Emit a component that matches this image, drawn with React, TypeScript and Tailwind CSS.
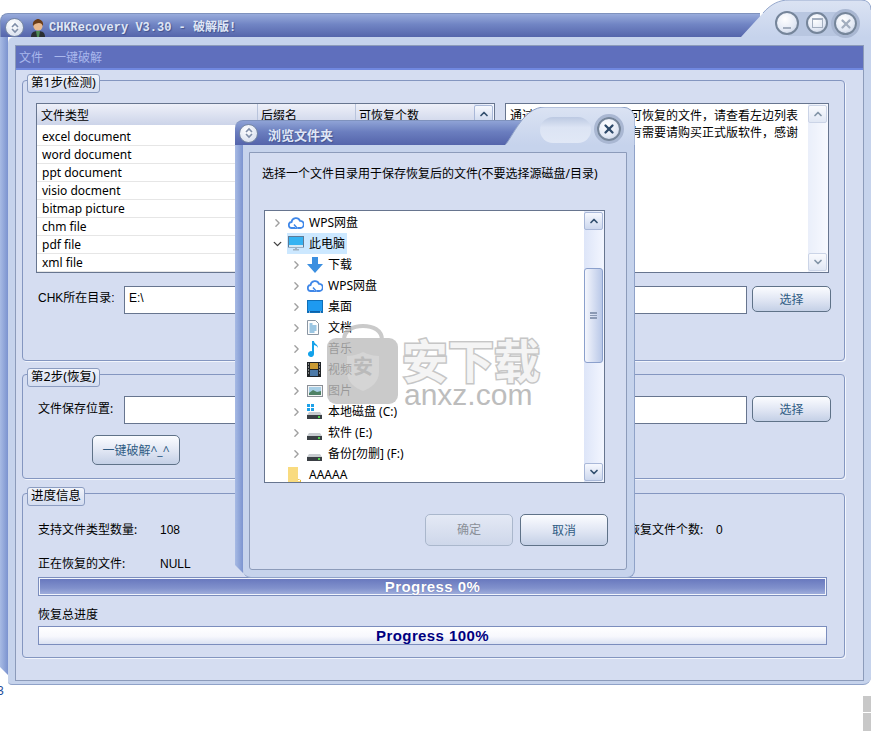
import { ChevronDown, ChevronRight, ChevronUp, X } from "lucide-react";
import type { ReactNode } from "react";

const FONT = "font-['Noto_Sans','Noto_Sans_CJK_SC',sans-serif]";
const ARIAL = "font-['Liberation_Sans','Noto_Sans_CJK_SC',sans-serif]";

const rows = [
  "excel document",
  "word document",
  "ppt document",
  "visio docment",
  "bitmap picture",
  "chm file",
  "pdf file",
  "xml file",
];

const ScrollBtn = ({ down }: { down?: boolean }) => (
  <div className="h-[18px] w-[19px] flex items-center justify-center rounded-[2px] border border-[#a9b8d8] bg-[linear-gradient(#f6f8fe,#cdd8ee)]">
    {down ? (
      <ChevronDown size={12} strokeWidth={3.5} className="text-[#33506f]" />
    ) : (
      <ChevronUp size={12} strokeWidth={3.5} className="text-[#33506f]" />
    )}
  </div>
);

const Legend = ({ children }: { children: ReactNode }) => (
  <div className="absolute left-[4px] top-[-7px] h-[19px] px-[3px] flex items-center rounded-[3px] border border-[#8b9cc0] bg-[linear-gradient(#f1f4fb,#d3dcf0)] text-[12.5px] text-black leading-none whitespace-nowrap">
    {children}
  </div>
);

const SkinButton = ({ children, className = "" }: { children: ReactNode; className?: string }) => (
  <div
    className={`flex items-center justify-center rounded-[5px] border border-[#5f7288] bg-[linear-gradient(#fbfcff,#dfe5f3_55%,#c4d0e6)] pt-[1px] text-[12px] text-[#2f5c84] ${className}`}
  >
    {children}
  </div>
);

const Field = ({ children }: { children?: ReactNode }) => (
  <div className={`w-[623px] h-[28px] border border-[#67758f] bg-white pl-[4px] pt-[3px] text-[12px] leading-[16px] text-black ${ARIAL}`}>
    {children}
  </div>
);

const Circle = ({ children, size, cls }: { children: ReactNode; size: string; cls?: string }) => (
  <div
    className={`${size} ${cls ?? ""} rounded-full border-2 border-[#75859a] bg-[radial-gradient(circle_at_40%_30%,#ffffff,#e3e9f5_60%,#b9c5db)] shadow-[0_0_0_3px_#a9b7d2] flex items-center justify-center`}
  >
    {children}
  </div>
);

const MenuGlyph = () => (
  <svg width="10" height="12" viewBox="0 0 10 12">
    <path d="M2 5 5 2l3 3M2 7l3 3 3-3" fill="none" stroke="#7f8ea8" strokeWidth="1.6" />
  </svg>
);

const Avatar = () => (
  <svg width="16" height="18" viewBox="0 0 16 18">
    <path d="M1 18c0-4 2-6 7-6s7 2 7 6z" fill="#2a2f33" />
    <path d="M6 12h4l-1 6H7z" fill="#4d8a55" />
    <circle cx="8" cy="7" r="4.6" fill="#e9b98e" />
    <path d="M3 7c-1-5 3-7 5-7s6 2 5 7c-1-2-2-3-4-3S4 5 3 7z" fill="#6b3d18" />
  </svg>
);

const Cloud = () => (
  <svg width="16" height="13" viewBox="0 0 16 13">
    <path
      d="M7 12H4a3 3 0 0 1-.4-6A4.400 4.400 0 0 1 12 4.800a3.400 3.400 0 0 1 .3 7.200H9.500"
      fill="#fff"
      stroke="#3f87e8"
      strokeWidth="1.8"
    />
    <path d="M6 8.500 9 12 6.500 13" fill="none" stroke="#3f87e8" strokeWidth="1.500" />
  </svg>
);

const Monitor = () => (
  <svg width="16" height="15" viewBox="0 0 16 15">
    <rect x="0.500" y="0.500" width="15" height="10.500" fill="#35b3f2" stroke="#5f7a96" />
    <path d="M1 9h14v2H1z" fill="#d5e7f2" />
    <path d="M5 13h6v1.500H5zM7 11h2v2H7z" fill="#9fb0c0" />
  </svg>
);

const Download = () => (
  <svg width="16" height="16" viewBox="0 0 16 16">
    <path d="M5 0h6v7h5l-8 9-8-9h5z" fill="#3b8fe0" />
  </svg>
);

const Desktop = () => (
  <svg width="16" height="13" viewBox="0 0 16 13">
    <rect x="0.500" y="0.500" width="15" height="12" fill="#1e9af0" stroke="#0f6fb8" />
    <path d="M1 11h14v1H1z" fill="#0c5fa8" />
    <path d="M2 12h1M13 12h1" stroke="#fff" />
  </svg>
);

const Doc = () => (
  <svg width="12" height="15" viewBox="0 0 12 15">
    <path d="M.5.500h8l3 3v11H.5z" fill="#fdfdfd" stroke="#8b96a3" />
    <path d="M2.500 4h3M2.500 6h7M2.500 8h7M2.500 10h7M2.500 12h5" stroke="#3b8fc8" />
  </svg>
);

const Note = () => (
  <svg width="12" height="16" viewBox="0 0 12 16">
    <path d="M5 0h2c0 3 4 3 4 7-1-2-2-2.500-4-3v9a3 3 0 1 1-2-2.800z" fill="#13a2ea" />
  </svg>
);

const Film = () => (
  <svg width="14" height="15" viewBox="0 0 14 15">
    <rect width="14" height="15" fill="#1f2326" />
    <rect x="3" y="1" width="8" height="6" fill="#c99a33" />
    <rect x="3" y="8" width="8" height="6" fill="#4c7aa8" />
    <path d="M1 2h1M1 5h1M1 8h1M1 11h1M12 2h1M12 5h1M12 8h1M12 11h1" stroke="#e8e8e8" />
  </svg>
);

const Picture = () => (
  <svg width="16" height="12" viewBox="0 0 16 12">
    <rect x="0.500" y="0.500" width="15" height="11" fill="#f3f4f5" stroke="#8a8f96" />
    <rect x="2" y="2" width="12" height="8" fill="#a8cfe6" />
    <path d="M2 8l4-3 4 2 4-1v4H2z" fill="#4f8266" />
  </svg>
);

const Disk = ({ win }: { win?: boolean }) => (
  <svg width="15" height="15" viewBox="0 0 15 15">
    {win && <path d="M0 0h3v3H0zM4 0h3v3H4zM0 4h3v3H0zM4 4h3v3H4z" fill="#1da1e8" />}
    <path d="M2 8h11l2 3H0z" fill="#c8ccd0" />
    <rect y="11" width="15" height="4" fill="#3a3f44" />
    <rect x="11" y="12" width="2" height="2" fill="#52d14f" />
  </svg>
);

const Folder = () => (
  <svg width="13" height="16" viewBox="0 0 13 16">
    <path d="M0 0h10v14h3v2H0z" fill="#f9db7f" />
    <path d="M10 13v-1l3 1v3h-1v-3z" fill="#e5b93f" />
  </svg>
);

type TreeItem = {
  label: string;
  icon: ReactNode;
  level: number;
  open?: boolean;
  selected?: boolean;
  leaf?: boolean;
};

const tree: TreeItem[] = [
  { label: "WPS网盘", icon: <Cloud />, level: 0 },
  { label: "此电脑", icon: <Monitor />, level: 0, open: true, selected: true },
  { label: "下载", icon: <Download />, level: 1 },
  { label: "WPS网盘", icon: <Cloud />, level: 1 },
  { label: "桌面", icon: <Desktop />, level: 1 },
  { label: "文档", icon: <Doc />, level: 1 },
  { label: "音乐", icon: <Note />, level: 1 },
  { label: "视频", icon: <Film />, level: 1 },
  { label: "图片", icon: <Picture />, level: 1 },
  { label: "本地磁盘 (C:)", icon: <Disk win />, level: 1 },
  { label: "软件 (E:)", icon: <Disk />, level: 1 },
  { label: "备份[勿删] (F:)", icon: <Disk />, level: 1 },
  { label: "AAAAA", icon: <Folder />, level: 0, leaf: true },
];

const TreeRow = ({ item }: { item: TreeItem }) => (
  <div className={`h-[21px] flex items-center text-[12px] text-black whitespace-nowrap ${item.level ? "pl-[25px]" : "pl-[6px]"}`}>
    <span className="w-[13px] flex justify-center shrink-0">
      {item.leaf ? null : item.open ? (
        <ChevronDown size={14} strokeWidth={2.5} className="text-[#404040]" />
      ) : (
        <ChevronRight size={14} strokeWidth={2.5} className="text-[#a0a0a0]" />
      )}
    </span>
    <div className={`ml-[3px] h-[21px] flex items-center pl-[1px] pr-[2px] ${item.selected ? "bg-[#cce8ff]" : ""}`}>
      <span className="w-[19px] shrink-0 flex">{item.icon}</span>
      <span className="ml-[2px]">{item.label}</span>
    </div>
  </div>
);

const BrowseDialog = () => (
  <div className="absolute left-[235px] top-[107px] w-[400px] h-[471px] flex flex-col">
    <div className="flex h-[38px] shrink-0">
      <div className="w-[290px] mt-[13px] rounded-tl-[8px] border-t border-[#7f92bd] bg-[linear-gradient(#8fa3d6,#6b7ebf_45%,#5464ab)] flex items-center pl-[4px]">
        <div className="w-[19px] h-[19px] rounded-full border border-[#7687a2] bg-[radial-gradient(circle_at_40%_30%,#ffffff,#cfd8ea)] flex items-center justify-center">
          <MenuGlyph />
        </div>
        <span className="ml-[10px] mt-[6px] text-[13px] font-bold text-[#dfe6f5] [text-shadow:1px_1px_1px_#43538f]">浏览文件夹</span>
      </div>
      <div className="relative -ml-[20px] w-[130px] h-[38px]">
        <svg width="130" height="38" viewBox="0 0 130 38" className="block">
          <defs>
            <linearGradient id="dlgTab" x1="0" y1="0" x2="0" y2="1">
              <stop offset="0" stopColor="#dbe3f3" />
              <stop offset="1" stopColor="#c6d3ec" />
            </linearGradient>
          </defs>
          <path d="M0 38 C8 30 18 0 40 0 H116 Q130 0 130 14 V38 Z" fill="url(#dlgTab)" />
          <path d="M0 38 C8 30 18 0 40 0 H116 Q130 0 130 14 V38" fill="none" stroke="#8fa2c8" />
        </svg>
        <div className="absolute left-[35px] top-[10px] w-[51px] h-[26px] rounded-[13px] bg-[linear-gradient(#bcc9e2,#dce4f4_40%,#e1e8f6)]" />
        <Circle size="w-[24px] h-[24px]" cls="absolute left-[92px] top-[10px]">
          <X size={14} strokeWidth={4} className="text-[#2e4a6a]" />
        </Circle>
      </div>
    </div>
    <div className="flex flex-1 min-h-0">
      <div className="w-[8px] h-[calc(100%-5px)] bg-[linear-gradient(90deg,#a7bae4,#7c94d0)] [clip-path:polygon(0_0,100%_0,100%_100%,0_calc(100%-8px))]" />
      <div className="flex-1 rounded-b-[8px] bg-[#c6d3ec] border-b border-r border-[#8fa2c8] pl-[6px] pr-[7px] pt-[7px] pb-[7px] flex">
        <div className="flex-1 border border-[#8c9bba] rounded-b-[3px] bg-[#d5ddf1] flex flex-col pl-[12px]">
          <div className="h-[40px] mt-[1px] flex items-center text-[12px] text-black">选择一个文件目录用于保存恢复后的文件(不要选择源磁盘/目录)</div>
          <div className="mt-[16px] ml-[2px] w-[341px] h-[273px] border border-[#67758f] bg-white flex">
            <div className="flex-1 overflow-hidden pt-[1px]">
              {tree.map((item, i) => (
                <TreeRow key={i} item={item} />
              ))}
            </div>
            <div className="w-[20px] shrink-0 bg-[linear-gradient(90deg,#dde5f8,#f3f6ff)] flex flex-col pt-[1px] pb-[1px]">
              <ScrollBtn />
              <div className="mt-[38px] h-[95px] w-[19px] rounded-[3px] border border-[#8ba0cc] bg-[linear-gradient(90deg,#f4f6fd,#b9c8e8)] flex items-center justify-center">
                <div className="w-[7px] h-[7px] border-y-2 border-[#8b9ab5] [background:linear-gradient(#8b9ab5,#8b9ab5)_center/100%_1px_no-repeat]" />
              </div>
              <div className="flex-1" />
              <ScrollBtn down />
            </div>
          </div>
          <div className="mt-[31px] ml-[163px] flex gap-[7px]">
            <div className="w-[88px] h-[32px] rounded-[5px] border border-[#aab7cc] bg-[linear-gradient(#e4e9f5,#ced7ea)] flex items-center justify-center text-[12px] text-[#8a8f98]">
              确定
            </div>
            <SkinButton className="w-[88px] h-[32px]">取消</SkinButton>
          </div>
        </div>
      </div>
    </div>
  </div>
);

const Watermark = () => (
  <div className="absolute left-[327px] top-[324px] w-[215px] h-[80px] pointer-events-none">
    <svg width="72" height="80" viewBox="0 0 72 80" className="absolute left-0 top-0 opacity-80">
      <path d="M17 18V16C17 6 26 2 36 2s19 4 19 14v2" fill="none" stroke="#bdbdbd" strokeWidth="4" />
      <rect y="14" width="71" height="66" rx="9" fill="#bebebe" />
      <path d="M20 32c6 0 12-2 16-4 4 2 10 4 16 4v16c0 10-8 16-16 19-8-3-16-9-16-19z" fill="#cbcbcb" />
    </svg>
    <span className="absolute left-[26px] top-[33px] text-[20px] font-bold leading-none text-[#bababa]">安</span>
    <div className="absolute left-[75px] top-[13px] text-[46px] font-bold leading-[47px] text-[#f4f4f4] whitespace-nowrap [-webkit-text-stroke:3px_#c6c6c6] [paint-order:stroke_fill]">安下载</div>
    <div className={`absolute left-[77px] top-[61px] text-[30px] leading-[19px] text-[#bdbdbd] whitespace-nowrap ${ARIAL}`}>anxz.com</div>
  </div>
);

const Group = ({ legend, className, children }: { legend: string; className: string; children: ReactNode }) => (
  <div className={`relative w-[823px] rounded-[4px] border border-[#8496c0] shadow-[1px_1px_0_#f2f5fc] ${className}`}>
    <Legend>{legend}</Legend>
    {children}
  </div>
);

const Row = ({ label, labelClass, children }: { label: string; labelClass: string; children?: ReactNode }) => (
  <div className="flex items-start">
    <div className={`w-[88px] pl-[2px] text-[12px] leading-[16px] text-black whitespace-nowrap ${labelClass}`}>{label}</div>
    <Field>{children}</Field>
    <SkinButton className="ml-[5px] w-[79px] h-[26px]">选择</SkinButton>
  </div>
);

const Progress = ({ text, fill, tone }: { text: string; fill: string; tone: string }) => (
  <div className={`w-[789px] h-[19px] border border-[#7b8dbd] flex items-center justify-center text-[15px] font-bold tracking-[0.4px] leading-none ${ARIAL} ${fill} ${tone}`}>
    {text}
  </div>
);

export default function App() {
  return (
    <div className={`relative w-[871px] h-[731px] overflow-hidden bg-white ${FONT}`}>
      {/* main window */}
      <div className="h-[685px] flex flex-col">
        <div className="flex h-[37px] shrink-0">
          <div className="w-[760px] mt-[13px] pt-[4px] rounded-tl-[8px] border-t border-l border-[#7f92bd] bg-[linear-gradient(#98abdb,#7185c4_45%,#5565ab)] flex items-center pl-[4px]">
            <div className="w-[19px] h-[19px] rounded-full border border-[#7687a2] bg-[radial-gradient(circle_at_40%_30%,#ffffff,#cfd8ea)] flex items-center justify-center">
              <MenuGlyph />
            </div>
            <span className="ml-[6px]">
              <Avatar />
            </span>
            <span className="ml-[3px] text-[12px] font-bold text-[#dfe6f5] font-['Liberation_Mono','Noto_Sans_CJK_SC',monospace] [text-shadow:1px_1px_1px_#43538f] whitespace-nowrap">
              CHKRecovery V3.30 - 破解版!
            </span>
          </div>
          <div className="relative -ml-[19px] w-[130px] h-[37px]">
            <svg width="130" height="37" viewBox="0 0 130 37" className="block">
              <defs>
                <linearGradient id="mainTab" x1="0" y1="0" x2="0" y2="1">
                  <stop offset="0" stopColor="#dbe3f3" />
                  <stop offset="1" stopColor="#c6d3ec" />
                </linearGradient>
              </defs>
              <path d="M0 37 L22 13 C30 4 38 0 48 0 H120 Q130 0 130 10 V37 Z" fill="url(#mainTab)" />
              <path d="M22 13 C30 4 38 0 48 0 H120 Q130 0 130 10" fill="none" stroke="#97a9cd" />
            </svg>
            <div className="absolute left-[47px] top-[12px] w-[58px] h-[24px] bg-[#b8c6e0]" />
            <Circle size="w-[24px] h-[24px]" cls="absolute left-[34px] top-[11px] !shadow-none">
              <div className="w-[8px] h-[2px] mt-[9px] bg-[#a3aebf]" />
            </Circle>
            <Circle size="w-[22px] h-[22px]" cls="absolute left-[65px] top-[12px] !shadow-none">
              <div className="w-[11px] h-[10px] border border-[#a3aebf] border-t-2" />
            </Circle>
            <Circle size="w-[23px] h-[23px]" cls="absolute left-[93px] top-[12px]">
              <X size={14} strokeWidth={4} className="text-[#a3aebf]" />
            </Circle>
          </div>
        </div>

        <div className="flex flex-1 min-h-0">
          <div className="w-[8px] h-[638px] bg-[linear-gradient(90deg,#a8bbe4,#7b93cf)] [clip-path:polygon(0_0,100%_0,100%_100%,0_calc(100%-8px))]" />
          <div className="flex-1 rounded-tl-[6px] rounded-br-[8px] rounded-bl-[4px] bg-[#c6d3ec] border-b border-[#8fa2c8] pl-[7px] pr-[7px] pt-[8px] pb-[3px] flex">
            <div className="flex-1 flex flex-col border border-[#8c9bba] bg-[#d5ddf1] pl-[6px]">
              {/* menu */}
              <div className="-ml-[6px] h-[24px] shrink-0 bg-[#5f6fbd] border-b-2 border-[#7088e0] flex items-center gap-[11px] pl-[3px] pt-[2px] text-[12px] text-[#a9b7ec]">
                <span>文件</span>
                <span>一键破解</span>
              </div>

              <Group legend="第1步(检测)" className="mt-[10px] h-[281px] pl-[13px] pt-[22px]">
                <div className="flex gap-[10px]">
                  <div className="w-[459px] h-[170px] border border-[#67758f] bg-white flex">
                    <div className="flex-1">
                      <div className="h-[21px] flex bg-[linear-gradient(#eef0f9,#ccd4e9)] text-[12px] text-black">
                        <div className="w-[221px] pl-[4px] pt-[1px] border-r border-[#b9c4dc] leading-[21px]">文件类型</div>
                        <div className="w-[98px] pl-[3px] pt-[1px] border-r border-[#b9c4dc] leading-[21px]">后缀名</div>
                        <div className="flex-1 pl-[3px] pt-[1px] leading-[21px]">可恢复个数</div>
                      </div>
                      <div className="pt-[3px]">
                        {rows.map((r) => (
                          <div key={r} className="h-[18px] pl-[5px] border-b border-[#e6e6e6] text-[12px] leading-[17px] text-black">
                            {r}
                          </div>
                        ))}
                      </div>
                    </div>
                    <div className="w-[20px] bg-[linear-gradient(90deg,#dde5f8,#f3f6ff)] flex flex-col pt-[1px]">
                      <ScrollBtn />
                    </div>
                  </div>
                  <div className="w-[324px] h-[170px] border border-[#67758f] bg-white flex">
                    <div className="flex-1 pl-[4px] pt-[3px] text-[12px] leading-[17px] text-black whitespace-nowrap overflow-hidden">
                      <div>通过本工具扫描出来的可恢复的文件，请查看左边列表</div>
                      <div>本软件仅供学习使用，有需要请购买正式版软件，感谢</div>
                    </div>
                    <div className="w-[20px] bg-[linear-gradient(90deg,#dde5f8,#f3f6ff)] flex flex-col justify-between py-[1px] opacity-60">
                      <ScrollBtn />
                      <ScrollBtn down />
                    </div>
                  </div>
                </div>
                <div className="mt-[13px]">
                  <Row label="CHK所在目录:" labelClass={`pt-[4px] ${ARIAL}`}>E:\</Row>
                </div>
              </Group>

              <Group legend="第2步(恢复)" className="mt-[13px] h-[105px] pl-[13px] pt-[21px]">
                <Row label="文件保存位置:" labelClass="pt-[5px]" />
                <SkinButton className="mt-[11px] ml-[56px] w-[88px] h-[30px]">一键破解^_^</SkinButton>
              </Group>

              <Group legend="进度信息" className="mt-[14px] h-[165px] pl-[15px] pt-[28px]">
                <div className="flex h-[16px] items-center text-[12px] text-black whitespace-nowrap">
                  <span className="w-[122px]">支持文件类型数量:</span>
                  <span className={`w-[456px] ${ARIAL}`}>108</span>
                  <span className="w-[100px]">可恢复文件个数:</span>
                  <span className={ARIAL}>0</span>
                </div>
                <div className="mt-[18px] flex h-[16px] items-center text-[12px] text-black whitespace-nowrap">
                  <span className="w-[122px]">正在恢复的文件:</span>
                  <span className={ARIAL}>NULL</span>
                </div>
                <div className="mt-[5px]">
                  <Progress
                    text="Progress 0%"
                    fill="bg-[linear-gradient(#6676bd,#8191cc_60%,#a4b2de)] shadow-[inset_0_0_0_1px_#f2f5fc]"
                    tone="text-white [text-shadow:0_0_1px_#56609a]"
                  />
                </div>
                <div className="mt-[11px] h-[16px] flex items-center text-[12px] text-black">恢复总进度</div>
                <div className="mt-[3px]">
                  <Progress
                    text="Progress 100%"
                    fill="bg-[linear-gradient(#ffffff,#f7f8fd_55%,#dbe2f2)]"
                    tone="text-[#000080]"
                  />
                </div>
              </Group>
            </div>
          </div>
        </div>
      </div>

      {/* bottom strip of the desktop behind */}
      <div className="h-[46px] flex justify-between">
        <span className="-ml-[3px] text-[12px] leading-[12px] text-[#1f4e9a]">3</span>
        <div className="mt-[11px] w-[8px] flex flex-col gap-[1px]">
          <div className="h-[16px] bg-[#c8c8c8]" />
          <div className="h-[18px] bg-[#c8c8c8]" />
        </div>
      </div>

      <BrowseDialog />
      <Watermark />
    </div>
  );
}
